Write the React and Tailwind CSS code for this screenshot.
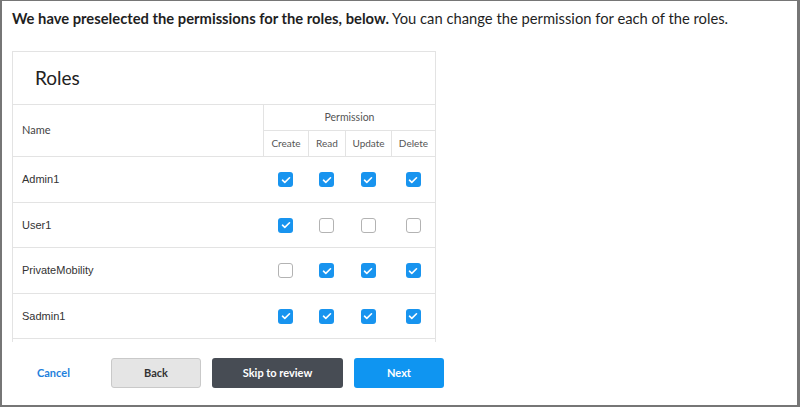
import React from "react";

const roles = [
  { name: "Admin1", perms: [true, true, true, true] },
  { name: "User1", perms: [true, false, false, false] },
  { name: "PrivateMobility", perms: [false, true, true, true] },
  { name: "Sadmin1", perms: [true, true, true, true] },
  { name: "Guest1", perms: [false, false, false, false] },
];

const cols = ["Create", "Read", "Update", "Delete"];

const Checkbox = ({ checked }) =>
  checked ? (
    <span className="w-[15px] h-[15px] rounded-[3px] bg-[#1894ef] flex items-center justify-center">
      <svg width="12" height="12" viewBox="0 0 12 12" fill="none">
        <path d="M2.5 6.2l2.3 2.2L9.5 3.8" stroke="white" strokeWidth="1.6" strokeLinecap="round" strokeLinejoin="round" />
      </svg>
    </span>
  ) : (
    <span className="w-[15px] h-[15px] rounded-[3px] bg-white border-[1.5px] border-[#b3b3b3]" />
  );

const App = () => {
  return (
    <div className="w-[800px] h-[407px] bg-white border-t border-l-2 border-r-[3px] border-b-2 border-[#767676] flex flex-col font-['Lato','Liberation_Sans',sans-serif] overflow-hidden">
      {/* intro */}
      <p className="pl-[10px] pt-[7px] text-[14.75px] leading-[20px] text-[#1f1f1f] whitespace-nowrap">
        <span className="font-bold">We have preselected the permissions for the roles, below.</span> You can change the permission for each of the roles.
      </p>

      {/* roles card */}
      <div className="ml-[10px] mt-[23px] w-[424px] h-[291px] shrink-0 border border-b-0 border-[#e3e3e3] overflow-hidden">
        <div className="h-[53px] border-b border-[#e3e3e3] flex items-center pl-[22px] text-[19px] text-[#222]">
          Roles
        </div>

        <div className="grid grid-cols-[250px_45px_37px_46px_44px] grid-rows-[26px_25px] border-b border-[#e3e3e3]">
          <div className="row-span-2 flex items-center pl-[9px] text-[11px] text-[#444]">Name</div>
          <div className="col-span-4 border-l border-b border-[#e3e3e3] flex items-center justify-center text-[10.5px] text-[#555]">
            Permission
          </div>
          {cols.map((c) => (
            <div key={c} className="border-l border-[#e3e3e3] flex items-center justify-center text-[10px] text-[#555]">
              {c}
            </div>
          ))}
        </div>

        {roles.map((r, idx) => (
          <div
            key={r.name}
            className={`grid grid-cols-[250px_45px_37px_46px_44px] border-b border-[#e3e3e3] ${idx % 2 ? "h-[45px]" : "h-[46px]"}`}
          >
            <div className="flex items-center pl-[9px] text-[11px] text-[#333] font-['Liberation_Sans',Arial,sans-serif]">
              {r.name}
            </div>
            {r.perms.map((p, i) => (
              <div key={i} className="flex items-center justify-center">
                <Checkbox checked={p} />
              </div>
            ))}
          </div>
        ))}
      </div>

      {/* actions */}
      <div className="mt-[16px] flex items-center text-[11px] leading-[14px] font-bold">
        <button className="ml-[35px] w-[74px] h-[30px] text-left text-[#1e7fdc]">Cancel</button>
        <button className="w-[90px] h-[30px] rounded-[3px] bg-[#e5e5e5] border border-[#c9c9c9] text-[#333]">
          Back
        </button>
        <button className="ml-[11px] w-[131px] h-[30px] rounded-[3px] bg-[#474c54] text-white">
          Skip to review
        </button>
        <button className="ml-[11px] w-[90px] h-[30px] rounded-[3px] bg-[#0f95f1] text-white">
          Next
        </button>
      </div>
    </div>
  );
};

export default App;
